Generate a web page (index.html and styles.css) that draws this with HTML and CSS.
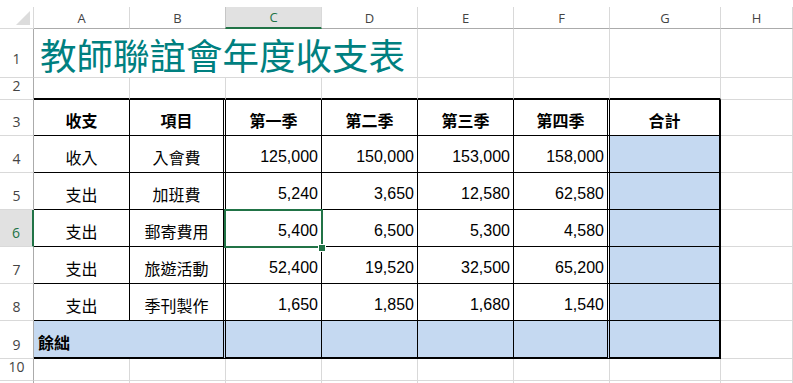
FILE: index.html
```html
<!DOCTYPE html>
<html lang="zh-Hant">
<head>
<meta charset="utf-8">
<title>教師聯誼會年度收支表</title>
<link rel="stylesheet" href="styles.css">
</head>
<body>
<div class="sheet">
  <!-- column headers -->
  <div class="c corner"><span class="tri"></span></div>
  <div class="c ch">A</div>
  <div class="c ch">B</div>
  <div class="c ch sel-col">C</div>
  <div class="c ch">D</div>
  <div class="c ch">E</div>
  <div class="c ch">F</div>
  <div class="c ch">G</div>
  <div class="c ch">H</div>

  <!-- row 1 -->
  <div class="c rh r1">1</div>
  <div class="c title">教師聯誼會年度收支表</div>
  <div class="c"></div>
  <div class="c"></div>
  <div class="c"></div>
  <div class="c"></div>

  <!-- row 2 -->
  <div class="c rh">2</div>
  <div class="c top"></div>
  <div class="c top"></div>
  <div class="c top"></div>
  <div class="c top"></div>
  <div class="c top"></div>
  <div class="c top"></div>
  <div class="c top"></div>
  <div class="c"></div>

  <!-- row 3 -->
  <div class="c rh">3</div>
  <div class="c tb ctr hd">收支</div>
  <div class="c tb ctr hd dbl">項目</div>
  <div class="c tb ctr hd">第一季</div>
  <div class="c tb ctr hd">第二季</div>
  <div class="c tb ctr hd">第三季</div>
  <div class="c tb ctr hd dbl">第四季</div>
  <div class="c tb ctr hd rt">合計</div>
  <div class="c"></div>

  <!-- row 4 -->
  <div class="c rh">4</div>
  <div class="c tb ctr">收入</div>
  <div class="c tb ctr dbl">入會費</div>
  <div class="c tb num">125,000</div>
  <div class="c tb num">150,000</div>
  <div class="c tb num">153,000</div>
  <div class="c tb num dbl">158,000</div>
  <div class="c tb rt fill"></div>
  <div class="c"></div>

  <!-- row 5 -->
  <div class="c rh">5</div>
  <div class="c tb ctr">支出</div>
  <div class="c tb ctr dbl">加班費</div>
  <div class="c tb num">5,240</div>
  <div class="c tb num">3,650</div>
  <div class="c tb num">12,580</div>
  <div class="c tb num dbl">62,580</div>
  <div class="c tb rt fill"></div>
  <div class="c"></div>

  <!-- row 6 -->
  <div class="c rh sel-row">6</div>
  <div class="c tb ctr">支出</div>
  <div class="c tb ctr dbl">郵寄費用</div>
  <div class="c tb num active">5,400<span class="sel-box"></span><span class="handle"></span></div>
  <div class="c tb num">6,500</div>
  <div class="c tb num">5,300</div>
  <div class="c tb num dbl">4,580</div>
  <div class="c tb rt fill"></div>
  <div class="c"></div>

  <!-- row 7 -->
  <div class="c rh">7</div>
  <div class="c tb ctr">支出</div>
  <div class="c tb ctr dbl">旅遊活動</div>
  <div class="c tb num">52,400</div>
  <div class="c tb num">19,520</div>
  <div class="c tb num">32,500</div>
  <div class="c tb num dbl">65,200</div>
  <div class="c tb rt fill"></div>
  <div class="c"></div>

  <!-- row 8 -->
  <div class="c rh">8</div>
  <div class="c tb ctr">支出</div>
  <div class="c tb ctr dbl">季刊製作</div>
  <div class="c tb num">1,650</div>
  <div class="c tb num">1,850</div>
  <div class="c tb num">1,680</div>
  <div class="c tb num dbl">1,540</div>
  <div class="c tb rt fill"></div>
  <div class="c"></div>

  <!-- row 9 -->
  <div class="c rh">9</div>
  <div class="c tb bt fill hd left dbl span2">餘絀</div>
  <div class="c tb bt fill"></div>
  <div class="c tb bt fill"></div>
  <div class="c tb bt fill"></div>
  <div class="c tb bt fill dbl"></div>
  <div class="c tb bt rt fill"></div>
  <div class="c"></div>

  <!-- row 10 -->
  <div class="c rh">10</div>
  <div class="c"></div>
  <div class="c"></div>
  <div class="c"></div>
  <div class="c"></div>
  <div class="c"></div>
  <div class="c"></div>
  <div class="c"></div>
  <div class="c"></div>

  <!-- row 11 (only its top edge is visible) -->
  <div class="c rh"></div>
  <div class="c"></div>
  <div class="c"></div>
  <div class="c"></div>
  <div class="c"></div>
  <div class="c"></div>
  <div class="c"></div>
  <div class="c"></div>
  <div class="c"></div>
</div>
</body>
</html>
```

FILE: styles.css
```css
html, body {
  margin: 0;
  padding: 0;
  background: #ffffff;
  overflow: hidden;
}

.sheet {
  width: 793px;
  height: 383px;
  padding-top: 7px;
  box-sizing: border-box;
  display: grid;
  grid-template-columns: 34px 96px 96px 96px 96px 96px 96px 111px 1fr;
  grid-template-rows: 22px 49px 22px 36px 37px 37px 37px 37px 37px 38px 22px 22px;
  overflow: hidden;
  font-family: "Noto Sans CJK TC", "Liberation Sans", sans-serif;
  font-size: 16px;
  color: #000;
}

.c {
  box-sizing: border-box;
  border-right: 1px solid #d9d9d9;
  border-bottom: 1px solid #d9d9d9;
  display: flex;
  align-items: flex-end;
  min-width: 0;
  line-height: 20px;
  padding: 0 4px 5px 4px;
  white-space: nowrap;
}

/* headers */
.corner {
  position: relative;
  padding: 0;
}
.tri {
  position: absolute;
  right: 3px;
  bottom: 3px;
  width: 0;
  height: 0;
  border-left: 14px solid transparent;
  border-bottom: 14px solid #dcdcdc;
}

.ch {
  border-bottom: 1px solid #ababab;
  justify-content: center;
  align-items: center;
  padding: 0;
  font-family: "Open Sans", "Noto Sans", sans-serif;
  font-size: 13px;
  color: #444;
}
.corner {
  border-bottom-color: #d9d9d9;
}

.rh {
  border-right: 1px solid #ababab;
  justify-content: center;
  padding: 0 0 3px 0;
  font-family: "Open Sans", "Noto Sans", sans-serif;
  font-size: 14px;
  color: #444;
}
.rh.r1 {
  padding-bottom: 8px;
}

.sel-col {
  background: #e1e1e1;
  color: #217346;
  border-bottom: 2px solid #217346;
  border-left: 1px solid #c6c6c6;
  margin-left: -1px;
}
.sel-row {
  background: #e1e1e1;
  color: #217346;
  border-right: 2px solid #217346;
}

/* title */
.title {
  grid-column: 2 / 6;
  font-family: "Noto Sans CJK TC", sans-serif;
  font-size: 36.5px;
  line-height: 40px;
  color: #008080;
  padding: 0 0 2px 6px;
}

/* table area */
.top {
  border-bottom: 2px solid #000;
}
.tb {
  border-right: 1px solid #000;
  border-bottom: 1px solid #000;
}
.dbl {
  border-right: 3px double #000;
}
.rt {
  border-right: 2px solid #000;
}
.bt {
  border-bottom: 2px solid #000;
}
.fill {
  background: #c5d9f1;
}
.hd {
  font-weight: bold;
}
.ctr {
  justify-content: center;
}
.hd.ctr {
  padding-bottom: 5px;
}
.left {
  justify-content: flex-start;
}
.span2 {
  grid-column: 2 / 4;
}
.num {
  justify-content: flex-end;
  font-family: "Liberation Sans", Arial, sans-serif;
  padding-right: 3px;
}

/* active cell */
.active {
  position: relative;
}
.sel-box {
  position: absolute;
  left: -2px;
  top: -1px;
  width: 99px;
  height: 39px;
  box-sizing: border-box;
  border: 2px solid #217346;
}
.handle {
  position: absolute;
  left: 92px;
  top: 34px;
  width: 6px;
  height: 6px;
  background: #217346;
  border: 1px solid #fff;
}
```
